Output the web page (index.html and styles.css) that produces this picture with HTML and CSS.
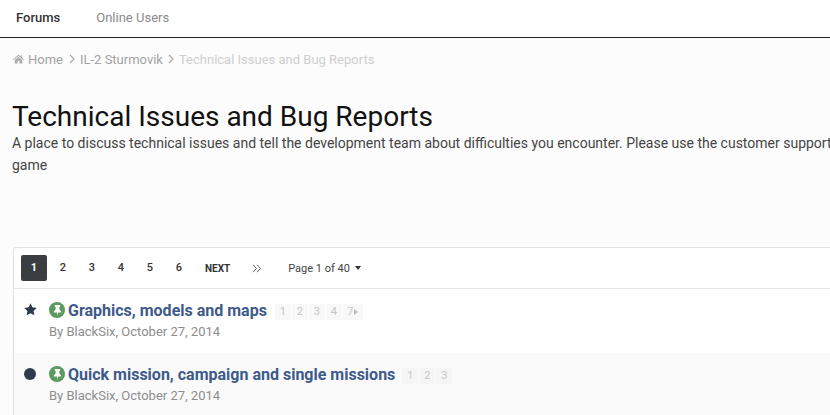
FILE: index.html
```html
<!DOCTYPE html>
<html lang="en">
<head>
  <meta charset="UTF-8">
  <title>Technical Issues and Bug Reports</title>
  <link rel="stylesheet" href="styles.css">
</head>
<body>
  <nav class="tabs">
    <a class="tab active">Forums</a>
    <a class="tab">Online Users</a>
  </nav>

  <main class="content">
    <ul class="crumbs">
      <li class="home">
        <svg class="home-icon" viewBox="0 0 12 10"><path d="M6 .3 0 5.300l.7.8L6 1.800l5.300 4.300.7-.8-2-1.600V.9H8.500v1.300L6 .3ZM6 2.700 1.900 6V10h3V7h2.200v3h3V6L6 2.700Z"/></svg>
        Home
      </li>
      <li class="sep"><svg viewBox="0 0 6 10"><path d="M1 1l4 4-4 4"/></svg></li>
      <li>IL-2 Sturmovik</li>
      <li class="sep"><svg viewBox="0 0 6 10"><path d="M1 1l4 4-4 4"/></svg></li>
      <li class="current">Technical Issues and Bug Reports</li>
    </ul>

    <h1>Technical Issues and Bug Reports</h1>
    <p class="desc">A place to discuss technical issues and tell the development team about difficulties you encounter. Please use the customer support<br>game</p>

    <section class="box">
      <div class="pager">
        <a class="page on">1</a>
        <a class="page">2</a>
        <a class="page">3</a>
        <a class="page">4</a>
        <a class="page">5</a>
        <a class="page">6</a>
        <a class="next">NEXT</a>
        <a class="last"><svg viewBox="0 0 10 9"><path d="M1 .8 4.500 4.500 1 8.200M5 .8 8.500 4.500 5 8.200"/></svg></a>
        <a class="jump">Page 1 of 40 <span class="caret"></span></a>
      </div>

      <div class="topic">
        <div class="mark">
          <svg class="star" viewBox="0 0 14 14"><path d="M7 .4l2 4.300 4.700.6-3.400 3.300.9 4.700L7 11l-4.200 2.300.9-4.700L.3 5.300 5 4.700z"/></svg>
        </div>
        <div class="topic-body">
          <div class="topic-title">
            <span class="pin"><svg viewBox="0 0 10 12"><path d="M2 0h6v1.200L7.100 2v2.900l2 2.100v1.100H5.600L5 12l-.6-3.900H.9V7l2-2.100V2L2 1.200z"/></svg></span>
            <a class="title">Graphics, models and maps</a>
            <span class="mini"><i>1</i><i>2</i><i>3</i><i>4</i><i class="more">7<b></b></i></span>
          </div>
          <p class="meta">By BlackSix, October 27, 2014</p>
        </div>
      </div>

      <div class="topic alt">
        <div class="mark"><span class="dot"></span></div>
        <div class="topic-body">
          <div class="topic-title">
            <span class="pin"><svg viewBox="0 0 10 12"><path d="M2 0h6v1.200L7.100 2v2.900l2 2.100v1.100H5.600L5 12l-.6-3.900H.9V7l2-2.100V2L2 1.200z"/></svg></span>
            <a class="title">Quick mission, campaign and single missions</a>
            <span class="mini"><i>1</i><i>2</i><i>3</i></span>
          </div>
          <p class="meta">By BlackSix, October 27, 2014</p>
        </div>
      </div>
    </section>
  </main>
</body>
</html>
```

FILE: styles.css
```css
* { box-sizing: border-box; margin: 0; padding: 0; }
html, body { height: 100%; overflow: hidden; }
body {
  background: #fcfcfc;
  font-family: 'Roboto', sans-serif;
  font-size: 13px;
  color: #333;
}
.tabs {
  display: flex;
  height: 38px;
  background: #fff;
  border-bottom: 1px solid #222;
  padding-left: 16px;
  gap: 36px;
  line-height: 35px;
  font-size: 13px;
}
.tab { color: #8a8a8a; }
.tab.active { color: #333; font-weight: 500; }
.content { padding: 0 0 0 13px; width: 1100px; }
.crumbs {
  display: flex;
  align-items: center;
  list-style: none;
  height: 18px;
  margin-top: 12px;
  gap: 5px;
  color: #a3a3a3;
  font-size: 13px;
}
.crumbs .current { color: #cfcfcf; }
.home { display: flex; align-items: center; gap: 4px; margin-right: 1px; }
.home-icon { width: 11px; height: 10px; fill: #aaa; }
.sep { display: flex; }
.sep svg { width: 6px; height: 10px; fill: none; stroke: #aaa; stroke-width: 1.200; }
h1 {
  font-size: 28px;
  font-weight: 400;
  color: #111;
  line-height: 34px;
  margin: 32px 0 0 -1px;
}
.desc {
  font-size: 14px;
  line-height: 22px;
  color: #444;
  width: 817px;
  margin: -2px 0 0 -1px;
  white-space: nowrap;
}
.box {
  margin-top: 71px;
  background: #fff;
  border: 1px solid #e0e0e0;
  border-radius: 3px 0 0 0;
}
.pager {
  display: flex;
  align-items: center;
  height: 41px;
  padding-left: 7px;
  border-bottom: 1px solid #e8e8e8;
  font-size: 11px;
  font-weight: 500;
  color: #333;
}
.page {
  width: 26px;
  height: 26px;
  line-height: 26px;
  margin-right: 3px;
  text-align: center;
  border-radius: 2px;
}
.page.on { background: #3a3d42; color: #fff; font-weight: 700; }
.next { margin-left: 10px; font-size: 10px; font-weight: 700; }
.last { display: flex; margin-left: 22px; }
.last svg { width: 10px; height: 9px; fill: none; stroke: #666; stroke-width: 1; }
.jump { margin-left: 26px; font-weight: 400; color: #444; display: flex; align-items: center; gap: 5px; }
.caret {
  border-left: 3px solid transparent;
  border-right: 3px solid transparent;
  border-top: 4px solid #333;
}
.topic {
  display: flex;
  height: 64px;
  padding-top: 11px;
}
.topic.alt { background: #fafafa; }
.mark { width: 35px; display: flex; justify-content: center; padding-top: 3px; padding-right: 3px; }
.star { width: 13px; height: 13px; fill: #2f3b4c; }
.dot { width: 12px; height: 12px; border-radius: 50%; background: #2f3b4c; margin-top: 1px; }
.topic-title { display: flex; align-items: center; height: 20px; }
.pin {
  width: 16px;
  height: 16px;
  border-radius: 50%;
  background: #5a9a5f;
  display: flex;
  align-items: center;
  justify-content: center;
  margin-right: 3px;
}
.pin svg { width: 9px; height: 11px; fill: #fff; }
.title { font-size: 16px; font-weight: 700; color: #3e5a8a; white-space: nowrap; }
.mini { display: flex; margin: 3px 0 0 8px; gap: 1px; }
.alt .mini { margin-left: 7px; }
.mini i {
  font-style: normal;
  font-size: 11px;
  color: #c6c6c6;
  background: #f8f8f8;
  width: 16px;
  height: 16px;
  line-height: 16px;
  text-align: center;
}
.alt .mini i { background: #f5f5f5; }
.mini .more { display: flex; align-items: center; justify-content: center; gap: 1px; width: 20px; }
.mini .more b {
  border-top: 3px solid transparent;
  border-bottom: 3px solid transparent;
  border-left: 4px solid #bbb;
}
.meta { font-size: 13px; color: #8d8d8d; margin-top: 4px; line-height: 16px; }
```
